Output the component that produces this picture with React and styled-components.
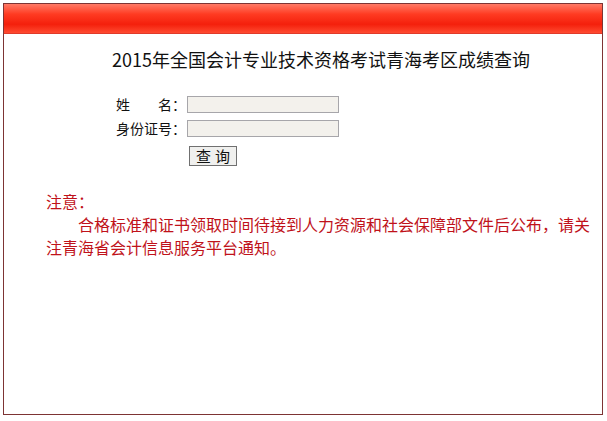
import React from "react";
import styled, { createGlobalStyle } from "styled-components";

const Global = createGlobalStyle`
  html, body { margin: 0; padding: 0; background: #fff; }
  body { font-family: "Noto Sans CJK SC", "Liberation Sans", sans-serif; }
`;

const Frame = styled.div`
  margin: 3px 0 0 3px;
  width: 598px;
  height: 410px;
  border: 1px solid #7d3434;
  display: flex;
  flex-direction: column;
`;

const TopBar = styled.div`
  height: 29px;
  background: linear-gradient(to bottom, #ff7a66 0%, #ff3b22 35%, #f4200c 70%, #ff4a30 100%);
  border-bottom: 1px solid #e03a2a;
`;

const Body = styled.div`
  flex: 1;
  display: flex;
  flex-direction: column;
`;

const Title = styled.h1`
  margin: 12px 0 0 0;
  padding-left: 36px;
  text-align: center;
  font-size: 18px;
  font-weight: normal;
  line-height: 26px;
  color: #111;
  font-family: "Noto Sans CJK SC", "Liberation Serif", serif;
`;

const Form = styled.div`
  margin: 24px 0 0 112px;
  display: grid;
  grid-template-columns: 71px auto;
  row-gap: 7px;
  align-items: center;
  font-size: 14px;
  color: #111;
`;

const Label = styled.span`
  line-height: 17px;
  white-space: pre;
`;

const Input = styled.input`
  box-sizing: border-box;
  width: 152px;
  height: 17px;
  margin: 0;
  border: 1px solid #a7a6aa;
  background: #f3f1ec;
`;

const Button = styled.button`
  grid-column: 2;
  justify-self: start;
  margin: 2px 0 0 2px;
  box-sizing: border-box;
  width: 48px;
  height: 20px;
  padding: 0;
  border: 1px solid #707070;
  background: #f0f0ee;
  font-family: inherit;
  font-size: 15px;
  line-height: 16px;
  letter-spacing: 4px;
  text-indent: 4px;
  color: #111;
`;

const Note = styled.div`
  margin: 24px 0 0 42px;
  width: 548px;
  color: #c0121a;
  font-size: 16px;
  line-height: 23px;
`;

const Para = styled.p`
  margin: 0;
  text-indent: ${(p) => (p.$indent ? "32px" : "0")};
`;

export default function App() {
  return (
    <>
      <Global />
      <Frame>
        <TopBar />
        <Body>
          <Title>2015年全国会计专业技术资格考试青海考区成绩查询</Title>
          <Form>
            <Label>{"姓\u3000\u3000名："}</Label>
            <Input type="text" />
            <Label>身份证号：</Label>
            <Input type="text" />
            <Button>查询</Button>
          </Form>
          <Note>
            <Para>注意：</Para>
            <Para $indent>
              合格标准和证书领取时间待接到人力资源和社会保障部文件后公布，请关注青海省会计信息服务平台通知。
            </Para>
          </Note>
        </Body>
      </Frame>
    </>
  );
}
